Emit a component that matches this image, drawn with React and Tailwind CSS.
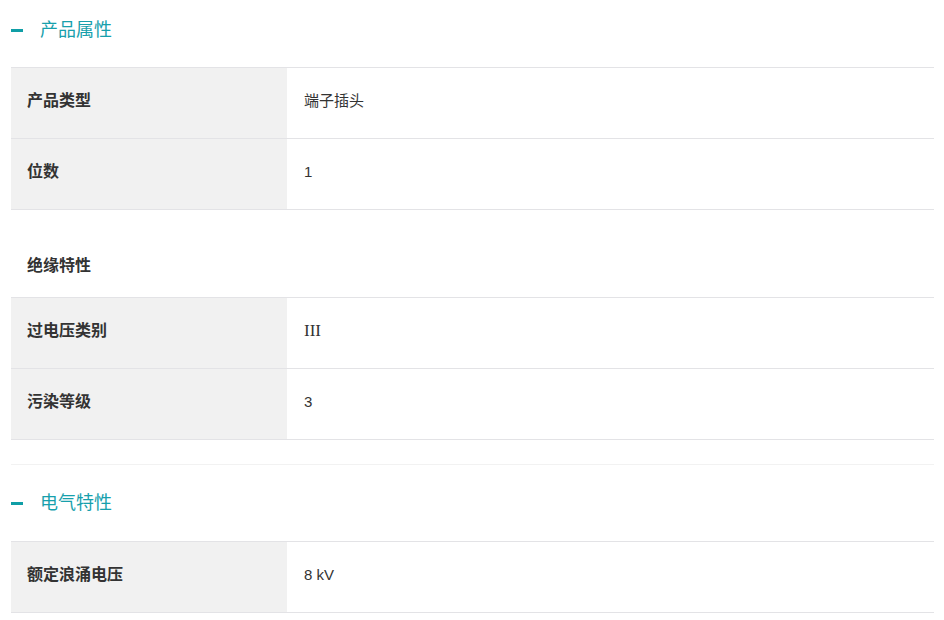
import React from "react";

const groups = [
  {
    title: "产品属性",
    blocks: [
      {
        rows: [
          ["产品类型", "端子插头"],
          ["位数", "1"],
        ],
      },
      {
        sub: "绝缘特性",
        rows: [
          ["过电压类别", "III"],
          ["污染等级", "3"],
        ],
      },
    ],
  },
  {
    title: "电气特性",
    blocks: [{ rows: [["额定浪涌电压", "8 kV"]] }],
  },
];

function Heading({ title, first }) {
  return (
    <div className={first ? "h-[67px] flex items-center pb-[7px]" : "h-[76px] flex items-center"}>
      <span className="block w-[12px] h-[3px] bg-[#109ea6]"></span>
      <span className="ml-[17px] text-[18px] leading-[22px] text-[#17a0ac]">{title}</span>
    </div>
  );
}

function Table({ rows }) {
  return (
    <div className="border-t border-[#e3e3e6]">
      {rows.map(([k, v]) => (
        <div key={k} className="flex h-[71px] border-b border-[#e3e3e6]">
          <div className="w-[276px] bg-[#f1f1f1] pl-4 pb-1 flex items-center text-[16px] font-bold text-[#333]">{k}</div>
          <div
            className="flex-1 pl-[17px] pb-1 flex items-center text-[15px] text-[#333]"
            style={v === "III" ? { fontFamily: '"Liberation Serif", serif', fontSize: "17px" } : undefined}
          >
            {v}
          </div>
        </div>
      ))}
    </div>
  );
}

export default function App() {
  return (
    <div
      className="w-[944px] h-[620px] bg-white pl-[11px] pr-[10px] overflow-hidden"
      style={{ fontFamily: '"Liberation Sans", "Noto Sans CJK SC", sans-serif' }}
    >
      {groups.map((g, gi) => (
        <div key={g.title}>
          {gi > 0 && <div className="mt-[24px] border-t border-[#f2f2f2]"></div>}
          <Heading title={g.title} first={gi === 0} />
          {g.blocks.map((b, bi) => (
            <div key={bi}>
              {b.sub && (
                <div className="pt-[45px] pb-[20px] pl-4 text-[16px] leading-[22px] font-bold text-[#333]">{b.sub}</div>
              )}
              <Table rows={b.rows} />
            </div>
          ))}
        </div>
      ))}
    </div>
  );
}
